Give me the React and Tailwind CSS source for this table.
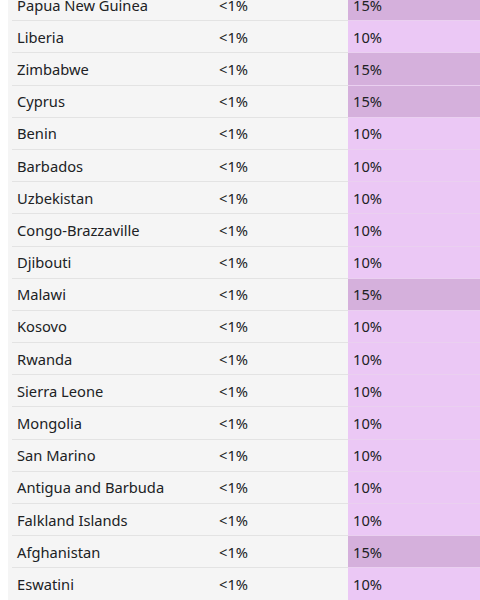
import React from 'react';

const rows = [
  ['Papua New Guinea', '15%'],
  ['Liberia', '10%'],
  ['Zimbabwe', '15%'],
  ['Cyprus', '15%'],
  ['Benin', '10%'],
  ['Barbados', '10%'],
  ['Uzbekistan', '10%'],
  ['Congo-Brazzaville', '10%'],
  ['Djibouti', '10%'],
  ['Malawi', '15%'],
  ['Kosovo', '10%'],
  ['Rwanda', '10%'],
  ['Sierra Leone', '10%'],
  ['Mongolia', '10%'],
  ['San Marino', '10%'],
  ['Antigua and Barbuda', '10%'],
  ['Falkland Islands', '10%'],
  ['Afghanistan', '15%'],
  ['Eswatini', '10%'],
];

export default function App() {
  return (
    <div className="w-[480px] h-[600px] overflow-hidden bg-white pl-2 text-[14.7px] text-[#202224]" style={{ fontFamily: '"Noto Sans", "Open Sans", sans-serif' }}>
      <div className="-mt-[11px]">
        {rows.map(([country, tariff]) => {
          const high = tariff === '15%';
          return (
            <div key={country} className="flex h-[32.2px]">
              <div className="w-[340px] bg-[#f5f5f5] pl-1 flex">
                <div className="flex-1 flex items-center border-b border-[#e3e3e3]">
                  <span className="w-[207px] pl-[5px]">{country}</span>
                  <span>&lt;1%</span>
                </div>
              </div>
              <div
                className={
                  high
                    ? 'flex-1 flex items-center pl-[5px] bg-[#d5b0dc] border-b border-[#ead0f0]'
                    : 'flex-1 flex items-center pl-[5px] bg-[#ebc8f5] border-b border-[#ead0f0]'
                }
              >
                {tariff}
              </div>
            </div>
          );
        })}
      </div>
    </div>
  );
}
